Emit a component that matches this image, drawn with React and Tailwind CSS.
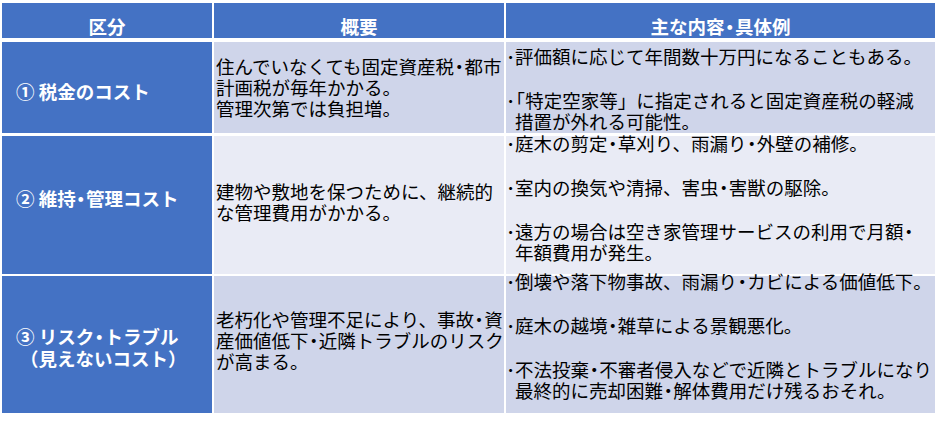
import React from "react";

// Narrow middle dot and opening bracket, as in the source slide's proportional font
const fmt = (s) =>
  s.split(/(・|「)/).map((p, i) => {
    if (p === "・" || p === "「")
      return (
        <span key={i} className="[font-feature-settings:'palt'] px-[0.5px]">
          {p}
        </span>
      );
    return p;
  });

const rows = [
  {
    h: "h-[91px]",
    mt: "mt-[4px]",
    bg: "bg-[#cfd5ea]",
    head: ["① 税金のコスト"],
    headPad: "pt-[6px]",
    summary: ["住んでいなくても固定資産税・都市", "計画税が毎年かかる。", "管理次第では負担増。"],
    sumPad: "",
    shift: "mt-[4px]",
    items: [
      ["評価額に応じて年間数十万円になることもある。"],
      ["「特定空家等」に指定されると固定資産税の軽減", "措置が外れる可能性。"],
    ],
  },
  {
    h: "h-[138px]",
    mt: "mt-[3px]",
    bg: "bg-[#e9ebf5]",
    head: ["② 維持・管理コスト"],
    headPad: "pb-[14px]",
    summary: ["建物や敷地を保つために、継続的", "な管理費用がかかる。"],
    sumPad: "pb-[6px]",
    shift: "-mt-[3px]",
    items: [
      ["庭木の剪定・草刈り、雨漏り・外壁の補修。"],
      ["室内の換気や清掃、害虫・害獣の駆除。"],
      ["遠方の場合は空き家管理サービスの利用で月額・", "年額費用が発生。"],
    ],
  },
  {
    h: "h-[137px]",
    mt: "mt-[2px]",
    bg: "bg-[#cfd5ea]",
    head: ["③ リスク・トラブル", "（見えないコスト）"],
    headPad: "pt-[5px]",
    summary: ["老朽化や管理不足により、事故・資", "産価値低下・近隣トラブルのリスク", "が高まる。"],
    sumPad: "pb-[9px]",
    shift: "-mt-[5px]",
    items: [
      ["倒壊や落下物事故、雨漏り・カビによる価値低下。"],
      ["庭木の越境・雑草による景観悪化。"],
      ["不法投棄・不審者侵入などで近隣とトラブルになり", "最終的に売却困難・解体費用だけ残るおそれ。"],
    ],
  },
];

const grid = "grid grid-cols-[210px_290px_429px] gap-x-[2px]";

export default function App() {
  return (
    <div className="w-[940px] h-[425px] bg-white pt-[3px] pl-[2px] font-['Noto_Sans_CJK_JP','Noto_Sans',sans-serif] text-[18.5px] text-black overflow-hidden">
      {/* header */}
      <div className={`${grid} h-[35px]`}>
        {["区分", "概要", "主な内容・具体例"].map((t) => (
          <div
            key={t}
            className="bg-[#4472c4] text-white font-bold flex justify-center items-start pt-[12px] leading-[22px] whitespace-nowrap"
          >
            <span>{fmt(t)}</span>
          </div>
        ))}
      </div>

      {rows.map((r, i) => (
        <div key={i} className={`${grid} ${r.h} ${r.mt}`}>
          {/* label */}
          <div className={`bg-[#4472c4] text-white font-bold flex flex-col justify-center pl-[14px] leading-[22px] whitespace-nowrap ${r.headPad}`}>
            {r.head.map((l, j) => (
              <div key={j} className={j > 0 ? "pl-[4px]" : ""}>
                {fmt(l)}
              </div>
            ))}
          </div>

          {/* summary */}
          <div className={`${r.bg} flex flex-col justify-center pl-[2px] leading-[21px] whitespace-nowrap ${r.sumPad}`}>
            {r.summary.map((l, j) => (
              <div key={j}>{fmt(l)}</div>
            ))}
          </div>

          {/* details */}
          <div className={`${r.bg} leading-[21px] whitespace-nowrap`}>
            <div className={`flex flex-col gap-[23px] ${r.shift}`}>
              {r.items.map((it, j) => (
                <div key={j} className="flex">
                  <span className="w-[9px] shrink-0">･</span>
                  <div className="flex flex-col">
                    {it.map((l, k) => (
                      <span key={k}>{fmt(l)}</span>
                    ))}
                  </div>
                </div>
              ))}
            </div>
          </div>
        </div>
      ))}
    </div>
  );
}
